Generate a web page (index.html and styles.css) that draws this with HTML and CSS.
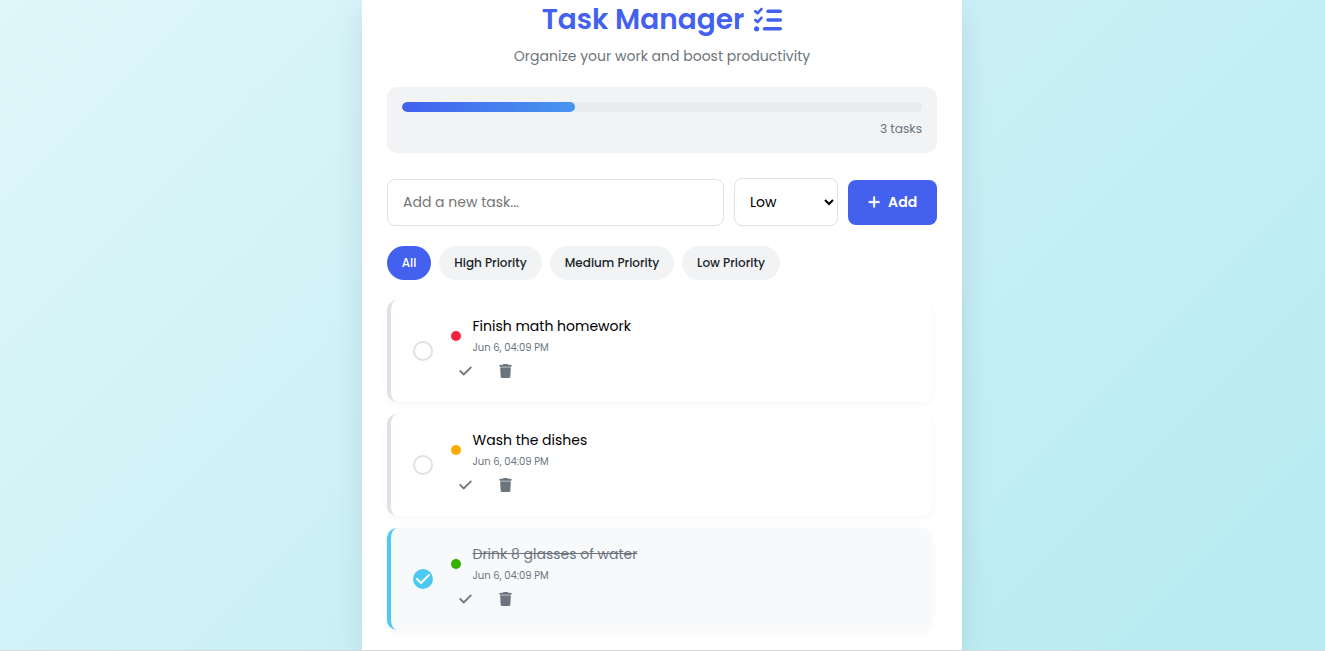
FILE: index.html
```html
<!DOCTYPE html>
<html lang="en">
<head>
<meta charset="utf-8">
<title>Task Manager</title>
<link rel="stylesheet" href="styles.css">
</head>
<body>
<svg class="sprite" aria-hidden="true">
  <symbol id="check" viewBox="0 0 448 512"><path d="M438.6 105.4c12.5 12.5 12.5 32.8 0 45.3l-256 256c-12.5 12.5-32.8 12.5-45.3 0l-128-128c-12.5-12.5-12.5-32.8 0-45.3s32.8-12.5 45.3 0L160 338.7 393.4 105.4c12.5-12.5 32.8-12.5 45.3 0z"/></symbol>
  <symbol id="trash" viewBox="0 0 448 512"><path d="M135.2 17.7L128 32H32C14.3 32 0 46.3 0 64S14.3 96 32 96H416c17.7 0 32-14.3 32-32s-14.3-32-32-32H320l-7.2-14.3C307.4 6.8 296.3 0 284.2 0H163.8c-12.1 0-23.2 6.8-28.6 17.7zM416 128H32L53.2 467c1.6 25.3 22.6 45 47.9 45H346.9c25.3 0 46.3-19.7 47.9-45L416 128z"/></symbol>
</svg>
<main class="container">
  <header class="header">
    <h1 class="title"><span>Task Manager</span>
      <svg class="title-icon" viewBox="0 0 512 512"><path d="M152.1 38.2c9.9 8.9 10.7 24 1.8 33.9l-72 80c-4.4 4.9-10.6 7.8-17.2 7.9s-12.9-2.4-17.6-7L7 113C-2.3 103.6-2.3 88.4 7 79s24.6-9.4 33.9 0l22.1 22.1 55.1-61.2c8.9-9.9 24-10.7 33.9-1.8zm0 160c9.9 8.9 10.7 24 1.8 33.9l-72 80c-4.4 4.9-10.6 7.8-17.2 7.9s-12.9-2.4-17.6-7L7 273c-9.4-9.4-9.4-24.6 0-33.9s24.6-9.4 33.9 0l22.1 22.1 55.1-61.2c8.9-9.9 24-10.7 33.9-1.8zM224 96c0-17.7 14.3-32 32-32H480c17.7 0 32 14.3 32 32s-14.3 32-32 32H256c-17.7 0-32-14.3-32-32zm0 160c0-17.7 14.3-32 32-32H480c17.7 0 32 14.3 32 32s-14.3 32-32 32H256c-17.7 0-32-14.3-32-32zM160 416c0-17.7 14.3-32 32-32H480c17.7 0 32 14.3 32 32s-14.3 32-32 32H192c-17.7 0-32-14.3-32-32zM48 368a48 48 0 1 1 0 96 48 48 0 1 1 0-96z"/></svg>
    </h1>
    <p class="subtitle">Organize your work and boost productivity</p>
  </header>

  <section class="progress">
    <div class="progress-bar"><div class="progress-fill" style="width:33.333%"></div></div>
    <div class="progress-count">3 tasks</div>
  </section>

  <form class="task-form">
    <input class="task-input" type="text" placeholder="Add a new task...">
    <select class="task-select"><option>Low</option><option>Medium</option><option>High</option></select>
    <button class="add-button" type="button">
      <svg class="add-icon" viewBox="0 0 448 512"><path d="M256 80c0-17.7-14.3-32-32-32s-32 14.3-32 32V224H48c-17.7 0-32 14.3-32 32s14.3 32 32 32H192V432c0 17.7 14.3 32 32 32s32-14.3 32-32V288H400c17.7 0 32-14.3 32-32s-14.3-32-32-32H256V80z"/></svg>
      <span>Add</span>
    </button>
  </form>

  <nav class="filters">
    <button class="filter filter-all active">All</button>
    <button class="filter filter-high">High Priority</button>
    <button class="filter filter-medium">Medium Priority</button>
    <button class="filter filter-low">Low Priority</button>
  </nav>

  <ul class="tasks">
    <li class="task">
      <span class="checkbox"></span>
      <div class="task-body">
        <div class="task-info"><span class="dot high"></span><div><div class="task-name"><span>Finish math homework</span></div><div class="task-date">Jun 6, 04:09 PM</div></div></div>
        <div class="actions"><svg class="action"><use href="#check"/></svg><svg class="action"><use href="#trash"/></svg></div>
      </div>
    </li>
    <li class="task">
      <span class="checkbox"></span>
      <div class="task-body">
        <div class="task-info"><span class="dot medium"></span><div><div class="task-name"><span>Wash the dishes</span></div><div class="task-date">Jun 6, 04:09 PM</div></div></div>
        <div class="actions"><svg class="action"><use href="#check"/></svg><svg class="action"><use href="#trash"/></svg></div>
      </div>
    </li>
    <li class="task done">
      <span class="checkbox"><svg class="checkmark"><use href="#check"/></svg></span>
      <div class="task-body">
        <div class="task-info"><span class="dot low"></span><div><div class="task-name"><span>Drink 8 glasses of water</span></div><div class="task-date">Jun 6, 04:09 PM</div></div></div>
        <div class="actions"><svg class="action"><use href="#check"/></svg><svg class="action"><use href="#trash"/></svg></div>
      </div>
    </li>
  </ul>
</main>
</body>
</html>
```
FILE: styles.css
```css
* { box-sizing: border-box; margin: 0; padding: 0; }
body {
  height: 651px;
  overflow: hidden;
  display: flex;
  justify-content: center;
  padding-right: 1px;
  border-bottom: 1px solid #d8d8d8;
  background: linear-gradient(135deg, #dff6fa, #b5ebf1);
  font-family: Poppins, Inter, "Open Sans", sans-serif;
  color: #000;
}
button, input, select { font-family: inherit; }
.sprite { display: none; }
.container {
  width: 600px;
  height: 650px;
  padding: 0 25px;
  background: #fff;
  box-shadow: 0 10px 30px rgba(0, 0, 0, 0.1);
}
.header { height: 87px; text-align: center; }
.title {
  display: flex;
  justify-content: center;
  align-items: center;
  gap: 10px;
  height: 39px;
  font-size: 28px;
  font-weight: 600;
  color: #4361ee;
  white-space: nowrap;
}
.title-icon { width: 28px; height: 28px; fill: currentColor; }
.subtitle { line-height: 34px; font-size: 14px; color: #6c757d; }
.progress { height: 66px; padding: 15px; border-radius: 10px; background: #f1f3f5; }
.progress-bar { height: 10px; border-radius: 5px; background: #e9ecef; overflow: hidden; }
.progress-fill { height: 10px; border-radius: 5px; background: linear-gradient(90deg, #4361ee, #4895ef); }
.progress-count { margin-top: 8px; line-height: 18px; text-align: right; font-size: 12.2px; color: #6c757d; }
.task-form { display: flex; align-items: center; gap: 10px; height: 48px; margin-top: 25px; }
.task-input {
  width: 337px;
  height: 47px;
  padding: 0 15px;
  border: 1px solid #dee2e6;
  border-radius: 8px;
  font-size: 14px;
}
.task-input::placeholder { color: #757575; }
.task-select {
  width: 104px;
  height: 48px;
  padding: 0 0 0 11px;
  border: 1px solid #dee2e6;
  border-radius: 8px;
  background: #fff;
  font-size: 14px;
  color: #000;
}
.add-button {
  display: flex;
  justify-content: center;
  align-items: center;
  gap: 8px;
  width: 89px;
  height: 45px;
  border: 0;
  border-radius: 8px;
  background: #4361ee;
  color: #fff;
  font-size: 14px;
  font-weight: 600;
}
.add-icon { width: 12.25px; height: 14px; fill: currentColor; stroke: currentColor; stroke-width: 12; }
.filters { display: flex; gap: 8px; margin-top: 20px; }
.filter {
  height: 34px;
  border: 0;
  border-radius: 20px;
  background: #f1f3f5;
  color: #212529;
  font-size: 12px;
  font-weight: 500;
  white-space: nowrap;
}
.filter.active { background: #4361ee; color: #fff; }
.filter-all { width: 44px; }
.filter-high { width: 103px; }
.filter-medium { width: 124px; }
.filter-low { width: 98px; }
.tasks { list-style: none; display: flex; flex-direction: column; gap: 12px; margin-top: 20px; padding-right: 5px; }
.task {
  display: flex;
  align-items: center;
  gap: 18px;
  height: 102px;
  padding-left: 22px;
  border-left: 4px solid #dee2e6;
  border-radius: 10px;
  background: #fff;
  box-shadow: 0 2px 8px rgba(0, 0, 0, 0.04);
}
.task.done { border-left-color: #4cc9f0; background: #f8f9fa; }
.checkbox {
  display: flex;
  justify-content: center;
  align-items: center;
  width: 20px;
  height: 20px;
  border: 2px solid #dee2e6;
  border-radius: 50%;
}
.done .checkbox { border-color: #4cc9f0; background: #4cc9f0; }
.checkmark { flex: none; width: 14px; height: 16px; fill: #fff; }
.task-body { height: 72px; }
.task-info { display: flex; align-items: center; gap: 11.5px; height: 42px; }
.dot { width: 10px; height: 10px; border-radius: 50%; }
.dot.high { background: #ef233c; }
.dot.medium { background: #ffaa00; }
.dot.low { background: #38b000; }
.task-name { height: 22px; line-height: 22px; font-size: 14px; }
.task-date { height: 20px; line-height: 21px; font-size: 10px; color: #6c757d; }
.done .task-name { color: #6c757d; text-decoration: line-through; }
.actions { display: flex; gap: 27px; padding: 7px 0 0 8px; }
.action { width: 13px; height: 14px; fill: #6c757d; stroke: #6c757d; stroke-width: 10; }
```
